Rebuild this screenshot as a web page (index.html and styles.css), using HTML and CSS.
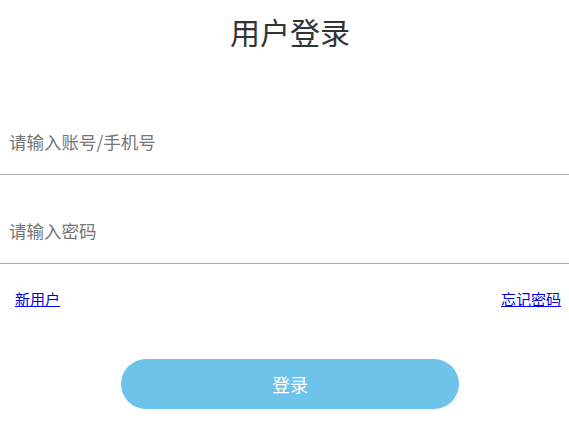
FILE: index.html
```html
<!DOCTYPE html>
<html lang="zh-CN">
<head>
    <meta charset="UTF-8">
    <meta name="viewport" content="width=device-width, initial-scale=1.0">
    <title>用户登录</title>
    <link rel="stylesheet" href="styles.css">
</head>
<body>
    <h1 class="title">用户登录</h1>

    <form class="login-form">
        <input type="text" class="field" placeholder="请输入账号/手机号">
        <input type="password" class="field field-pwd" placeholder="请输入密码">

        <div class="links">
            <a href="#">新用户</a>
            <a href="#">忘记密码</a>
        </div>

        <div class="actions">
            <button type="button" class="login-btn">登录</button>
        </div>
    </form>
</body>
</html>
```

FILE: styles.css
```css
body {
    margin: 0;
    padding: 0;
    font-family: "Noto Sans CJK SC", "Liberation Sans", sans-serif;
    color: #333;
    background-color: #fff;
}

.title {
    margin: 0;
    padding-left: 11px;
    font-size: 30px;
    font-weight: normal;
    line-height: 62px;
    text-align: center;
    color: #333;
}

.login-form {
    margin-top: 52px;
}

.field {
    display: block;
    width: 100%;
    height: 61px;
    box-sizing: border-box;
    padding: 0 9px 6px;
    border: none;
    border-bottom: 1px solid #aaa;
    outline: none;
    font-family: inherit;
    font-size: 17.5px;
    color: #333;
}

.field::placeholder {
    color: #757575;
}

.field-pwd {
    margin-top: 28px;
}

.links {
    display: flex;
    justify-content: space-between;
    margin-top: 25px;
    padding: 0 8px 0 15px;
    font-size: 15px;
    line-height: 20px;
}

.links a {
    color: #00e;
}

.actions {
    display: flex;
    justify-content: center;
    margin-top: 50px;
    padding-left: 11px;
}

.login-btn {
    width: 338px;
    height: 50px;
    border: none;
    border-radius: 25px;
    background-color: #6ec3ea;
    color: #fff;
    font-family: inherit;
    font-size: 18px;
    cursor: pointer;
}
```
